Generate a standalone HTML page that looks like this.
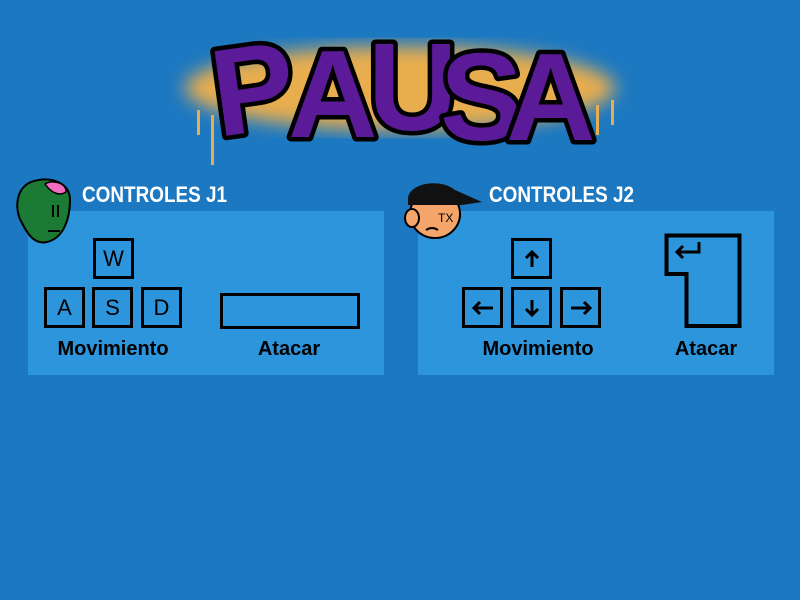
<!DOCTYPE html>
<html><head><meta charset="utf-8"><style>
body{margin:0;width:800px;height:600px;overflow:hidden;background:#1c78c1;font-family:"Liberation Sans",sans-serif;position:relative}
.panel{position:absolute;top:211px;width:356px;height:164px;background:#2d95dc}
.k{position:absolute;width:35px;height:35px;border:3px solid #000;font:22px "Liberation Sans",sans-serif;display:flex;align-items:center;justify-content:center;color:#000}
.lbl{position:absolute;font:bold 20px "Liberation Sans",sans-serif;color:#000;transform:translateX(-50%);top:338px;white-space:nowrap}
.t{position:absolute;top:182px;font:bold 22px "Liberation Sans",sans-serif;color:#fff;transform:scaleX(0.86);transform-origin:0 0}
</style></head><body>
<svg width="800" height="180" style="position:absolute;left:0;top:0">
<defs><filter id="b"><feGaussianBlur stdDeviation="9"/></filter></defs>
<ellipse cx="400" cy="88" rx="215" ry="42" fill="#e8ad4e" filter="url(#b)"/>
<rect x="211" y="115" width="3" height="50" fill="#e8ad4e"/>
<rect x="197" y="110" width="3" height="25" fill="#e8ad4e"/>
<rect x="596" y="105" width="3" height="30" fill="#e8ad4e"/>
<rect x="611" y="100" width="3" height="25" fill="#e8ad4e"/>
<g font-family="Liberation Sans" font-weight="bold" font-size="124" fill="#5b1a98" stroke="#000" stroke-width="9" paint-order="stroke" stroke-linejoin="round">
<text x="212" y="132" transform="rotate(-8 250 90)">P</text>
<text x="288" y="137">A</text>
<text x="368" y="130">U</text>
<text x="440" y="140">S</text>
<text x="506" y="140">A</text>
</g>
</svg>
<div class="panel" style="left:28px"></div>
<div class="panel" style="left:418px"></div>
<svg width="70" height="70" style="position:absolute;left:12px;top:178px"><path d="M22 3C40-2 58 5 58 22 58 40 52 60 35 64 22 67 15 55 10 45 2 32 3 8 22 3Z" fill="#1b7a34" stroke="#000" stroke-width="2"/><path d="M33 6C40 1 55 5 54 14 48 18 40 16 33 6Z" fill="#f26cbf" stroke="#000" stroke-width="1.5"/><path d="M41 27v12M46 27v12M36 53h12" stroke="#000" stroke-width="2"/></svg>
<div class="t" style="left:82px">CONTROLES J1</div>
<svg width="85" height="70" style="position:absolute;left:400px;top:178px"><ellipse cx="35" cy="36" rx="25" ry="24" fill="#f6a56a" stroke="#000" stroke-width="2"/><ellipse cx="12" cy="40" rx="7" ry="9" fill="#f6a56a" stroke="#000" stroke-width="2"/><path d="M8 20C10 5 40 0 55 12L82 24 62 27H8Z" fill="#111"/><path d="M26 52q6-4 12 0" stroke="#000" stroke-width="2" fill="none"/><text x="38" y="44" font-size="12" font-family="Liberation Sans">TX</text></svg>
<div class="t" style="left:489px">CONTROLES J2</div>
<div class="k" style="left:93px;top:238px">W</div>
<div class="k" style="left:44px;top:287px">A</div>
<div class="k" style="left:92px;top:287px">S</div>
<div class="k" style="left:141px;top:287px">D</div>
<div style="position:absolute;left:220px;top:293px;width:134px;height:30px;border:3px solid #000"></div>
<div class="lbl" style="left:113px">Movimiento</div>
<div class="lbl" style="left:289px">Atacar</div>
<div class="k" style="left:511px;top:238px"><svg width="20" height="20"><path d="M10 18V3M4 9l6-6 6 6" fill="none" stroke="#000" stroke-width="3"/></svg></div>
<div class="k" style="left:462px;top:287px"><svg width="24" height="20"><path d="M22 10H3M9 4l-6 6 6 6" fill="none" stroke="#000" stroke-width="3"/></svg></div>
<div class="k" style="left:511px;top:287px"><svg width="20" height="20"><path d="M10 2V17M4 11l6 6 6-6" fill="none" stroke="#000" stroke-width="3"/></svg></div>
<div class="k" style="left:560px;top:287px"><svg width="24" height="20"><path d="M2 10H21M15 4l6 6-6 6" fill="none" stroke="#000" stroke-width="3"/></svg></div>
<svg width="80" height="100" style="position:absolute;left:663px;top:232px"><path d="M3.5 3.5H76.5V94H23.5V42H3.5Z" fill="none" stroke="#000" stroke-width="4"/><path d="M36 10V20H14M20 14l-6 6 6 6" fill="none" stroke="#000" stroke-width="3"/></svg>
<div class="lbl" style="left:538px">Movimiento</div>
<div class="lbl" style="left:706px">Atacar</div>
</body></html>
